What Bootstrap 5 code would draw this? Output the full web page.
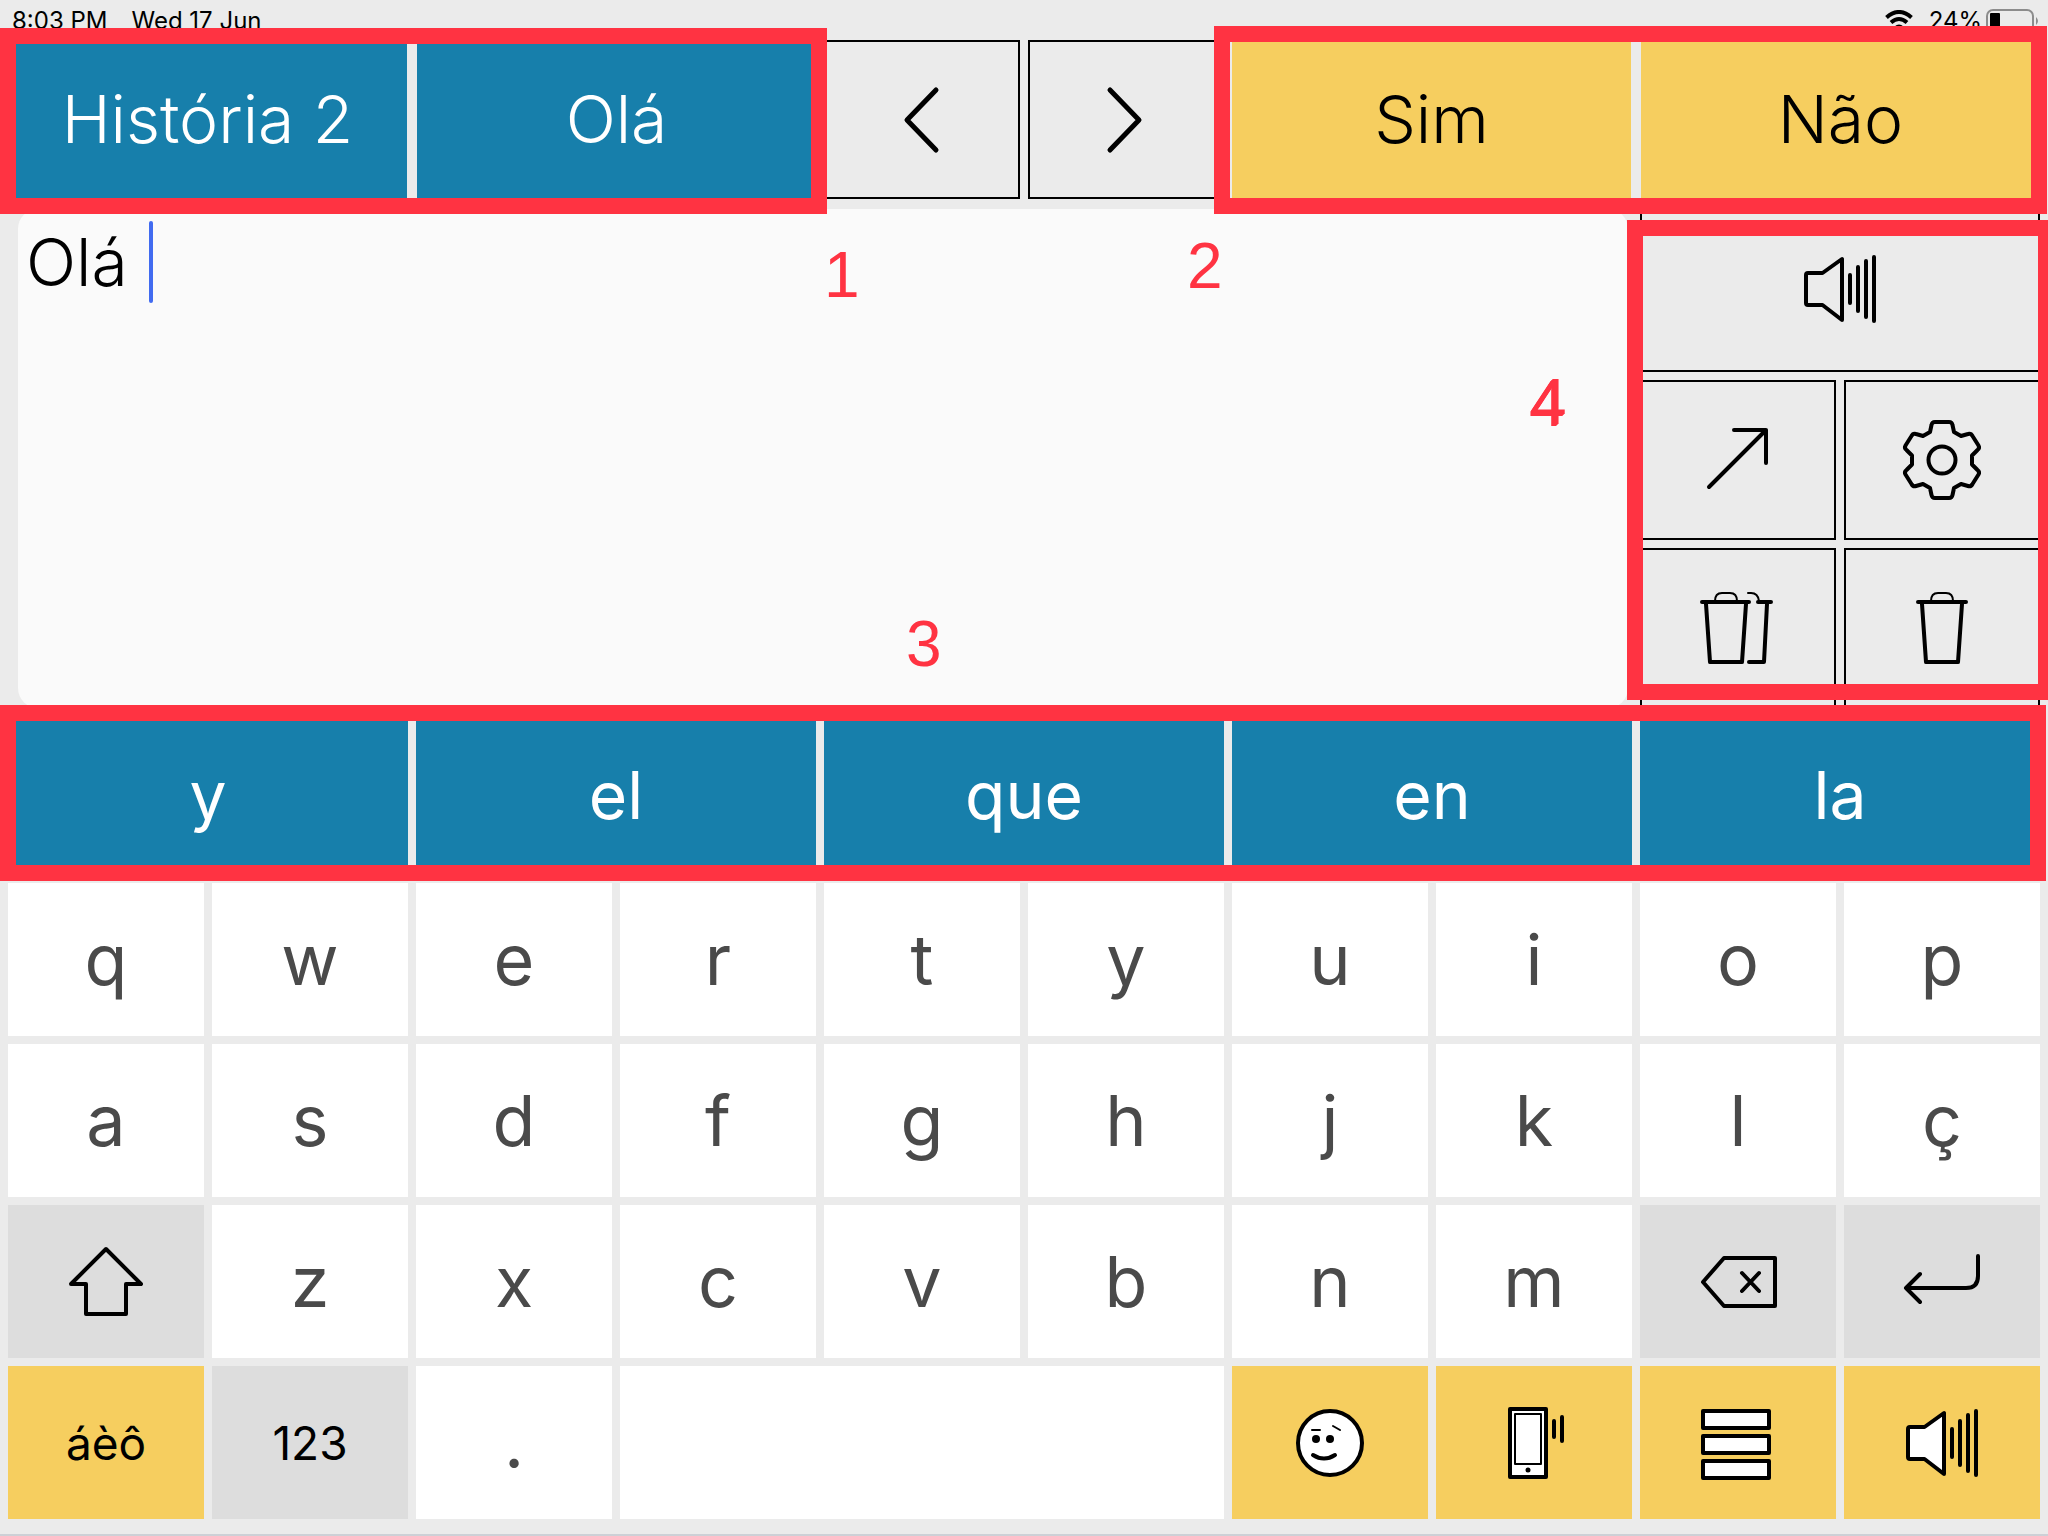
<!DOCTYPE html>
<html lang="pt">
<head>
<meta charset="utf-8">
<meta name="viewport" content="width=device-width, initial-scale=1">
<title>Teclado</title>
<link href="https://cdn.jsdelivr.net/npm/bootstrap@5.3.0/dist/css/bootstrap.min.css" rel="stylesheet">
<style>
  :root { --ink: #000; --blue: #177fab; --gold: #f6ce5f; --paper: #ebebeb; --red: #ff3342; }
  body { background: var(--paper); color: var(--ink); font-family: Inter, "Liberation Sans", sans-serif; border-bottom: 2px solid #cdd0d6; overflow-x: hidden; min-height: 100vh; }
  .board { padding: 0 8px 14px; }
  .gap-key { gap: 8px; }
  .gap-phrase { gap: 10px; }
  .status { height: 40px; padding: 2px 0 0 4px; font-size: 24px; line-height: 38px; }
  .tile { border: 0; border-radius: 0; padding: 0; color: var(--ink); background: #fff; display: flex; align-items: center; justify-content: center; flex: 1 1 0; min-width: 0; font-weight: inherit; line-height: 1; }
  .tile-blue { background: var(--blue); color: #fff; }
  .tile-gold { background: var(--gold); }
  .tile-grey { background: #ddd; }
  .tile-line { background: transparent; border: 2px solid var(--ink); }
  .topline { height: 159px; font-size: 66px; font-weight: 300; }
  .topline .tile { padding-bottom: 2px; }
  .half { flex: 2 2 8px; }
  .phrase { flex: 4 4 24px; }
  .workspace { margin-top: 7px; height: 502px; }
  .writer { flex: 8 8 56px; padding: 3px 4px 0 10px; }
  .writer textarea { background: #fafafa; border: 0; border-radius: 20px; resize: none; outline: 0; padding: 14px 8px; font-size: 66px; font-weight: 300; line-height: 78px; color: var(--ink); }
  .caret { left: 141px; top: 15px; width: 4px; height: 82px; border-radius: 2px; background: #416bf0; }
  .note { color: var(--red); font: 64px/64px "Liberation Sans", sans-serif; }
  .n1 { left: 816px; top: 37px; }
  .n2 { left: 1179px; top: 28px; }
  .n3 { left: 898px; top: 406px; }
  .n4 { left: 1523px; top: 164px; text-shadow: -2px 2px 0 var(--red), -1px 1px 0 var(--red); }
  .tools { flex: 2 2 8px; }
  .tool-row { height: 160px; }
  .tool-wide { height: 166px; }
  .predict { height: 155px; margin-top: 12px; font-size: 66px; font-weight: 400; }
  .predict .tile { padding-bottom: 6px; }
  .keyrow { height: 153px; margin-top: 8px; font-size: 70px; font-weight: 400; }
  .keyrow .tile-letter { color: #4a4a4a; }
  .keyrow .tile-small { font-size: 46px; }
  .tile-space { flex: 3 3 16px; }
  .frame { border: 16px solid var(--red); pointer-events: none; z-index: 2; }
  .frame-story { inset: -12px -11px -15px -8px; }
  .frame-answer { inset: -14px -7px -15px -18px; }
  .frame-predict { inset: -15px -6px -6px -8px; }
  .frame-tools { inset: 14px -14px 8px -13px; }
  .glyph { width: 84px; height: 84px; fill: none; stroke: var(--ink); stroke-width: 4; stroke-linecap: round; stroke-linejoin: round; }
  .glyph .thin { stroke-width: 2; }
  .glyph .solid { fill: var(--ink); stroke: none; }
  .glyph-white { fill: #fff; }
  .glyph-bold { stroke-width: 5; }
</style>
<script src="https://cdn.jsdelivr.net/npm/bootstrap@5.3.0/dist/js/bootstrap.bundle.min.js"></script>
</head>
<body>
<svg width="0" height="0" class="position-absolute" aria-hidden="true">
  <symbol id="speaker" viewBox="-42 -42 84 84">
    <path d="M-32-16H-17.500L2-30V31L-17.500 16H-32Q-34 16-34 14V-14Q-34-16-32-16Z"/>
    <path d="M10-14V14M18-22V22M26-28V28M34-32V32"/>
  </symbol>
</svg>
<main class="board">
  <header class="status d-flex justify-content-between">
    <div class="d-flex"><span class="me-4">8:03 PM</span><span>Wed 17 Jun</span></div>
    <div class="d-flex align-items-center">
      <svg class="me-3" width="28" height="22" viewBox="0 0 28 22" fill="none" stroke="#000" stroke-width="4"><path d="M1.500 7.500Q14-3.500 26.500 7.500M6 12.500Q14 5.500 22 12.500"/><path d="M14 20L9.500 16.500Q14 12.500 18.500 16.500Z" fill="#000" stroke="none"/></svg>
      <span class="me-1">24%</span>
      <svg width="54" height="24" viewBox="0 0 54 24"><rect x="1" y="1" width="46" height="22" rx="6" fill="none" stroke="#8c8c8c" stroke-width="2"/><path d="M50 8Q54 12 50 16Z" fill="#8c8c8c"/><rect x="4" y="4" width="10" height="16" rx="1"/></svg>
    </div>
  </header>

  <nav class="topline d-flex gap-key">
    <div class="phrase position-relative d-flex gap-phrase">
      <button class="tile tile-blue">História 2</button>
      <button class="tile tile-blue">Olá</button>
      <div class="frame frame-story position-absolute"></div>
    </div>
    <div class="half d-flex gap-key">
      <button class="tile tile-line" aria-label="Anterior"><svg class="glyph glyph-bold" viewBox="-42 -42 84 84"><path d="M14-29L-15 1L14 31"/></svg></button>
      <button class="tile tile-line" aria-label="Seguinte"><svg class="glyph glyph-bold" viewBox="-42 -42 84 84"><path d="M-16-29L13 1L-16 31"/></svg></button>
    </div>
    <div class="phrase position-relative d-flex gap-phrase">
      <button class="tile tile-gold">Sim</button>
      <button class="tile tile-gold">Não</button>
      <div class="frame frame-answer position-absolute"></div>
    </div>
  </nav>

  <section class="workspace d-flex gap-key">
    <div class="writer position-relative">
      <textarea class="w-100 h-100 d-block" aria-label="Mensagem" spellcheck="false">Olá </textarea>
      <span class="caret position-absolute"></span>
      <span class="note n1 position-absolute">1</span>
      <span class="note n2 position-absolute">2</span>
      <span class="note n3 position-absolute">3</span>
      <span class="note n4 position-absolute">4</span>
    </div>
    <div class="tools position-relative d-flex flex-column gap-key">
      <div class="tool-wide d-flex">
        <button class="tile tile-line" aria-label="Falar"><svg class="glyph"><use href="#speaker"/></svg></button>
      </div>
      <div class="tool-row d-flex gap-key">
        <button class="tile tile-line" aria-label="Partilhar"><svg class="glyph" viewBox="-42 -42 84 84"><path d="M-29 27L28-30M-4-30H28V3"/></svg></button>
        <button class="tile tile-line" aria-label="Definições"><svg class="glyph" viewBox="-42 -42 84 84"><circle r="13.500"/><path d="M-7-38H7Q10-38 10.500-35L12-28L19-24L26-26Q29-27 30.500-24L36.500-14.500Q38-12 35.500-10L30-4.500V4.500L35.500 10Q38 12 36.500 14.500L30.500 24Q29 27 26 26L19 24L12 28L10.500 35Q10 38 7 38H-7Q-10 38-10.500 35L-12 28L-19 24L-26 26Q-29 27-30.500 24L-36.500 14.500Q-38 12-35.500 10L-30 4.500V-4.500L-35.500-10Q-38-12-36.500-14.500L-30.500-24Q-29-27-26-26L-19-24L-12-28L-10.500-35Q-10-38-7-38Z"/></svg></button>
      </div>
      <div class="tool-row d-flex gap-key">
        <button class="tile tile-line" aria-label="Apagar tudo"><svg class="glyph" viewBox="-42 -42 84 84"><path d="M-36-26H11M-32-24L-28 34H4L8-24M20-26H33M29-24L26 34H11"/><path class="thin" d="M-23-27Q-23-35-16-35H-8Q-1-35-1-27M10-35H13Q20-35 21-27"/></svg></button>
        <button class="tile tile-line" aria-label="Apagar"><svg class="glyph" viewBox="-42 -42 84 84"><path d="M-24-26H24M-20-24L-16 34H16L20-24"/><path class="thin" d="M-11-27Q-11-35-4-35H4Q11-35 11-27"/></svg></button>
      </div>
      <div class="frame frame-tools position-absolute"></div>
    </div>
  </section>

  <section class="predict position-relative d-flex gap-key">
    <button class="tile tile-blue">y</button>
    <button class="tile tile-blue">el</button>
    <button class="tile tile-blue">que</button>
    <button class="tile tile-blue">en</button>
    <button class="tile tile-blue">la</button>
    <div class="frame frame-predict position-absolute"></div>
  </section>

  <section>
    <div class="keyrow d-flex gap-key">
      <button class="tile tile-letter">q</button><button class="tile tile-letter">w</button><button class="tile tile-letter">e</button><button class="tile tile-letter">r</button><button class="tile tile-letter">t</button><button class="tile tile-letter">y</button><button class="tile tile-letter">u</button><button class="tile tile-letter">i</button><button class="tile tile-letter">o</button><button class="tile tile-letter">p</button>
    </div>
    <div class="keyrow d-flex gap-key">
      <button class="tile tile-letter">a</button><button class="tile tile-letter">s</button><button class="tile tile-letter">d</button><button class="tile tile-letter">f</button><button class="tile tile-letter">g</button><button class="tile tile-letter">h</button><button class="tile tile-letter">j</button><button class="tile tile-letter">k</button><button class="tile tile-letter">l</button><button class="tile tile-letter">ç</button>
    </div>
    <div class="keyrow d-flex gap-key">
      <button class="tile tile-grey" aria-label="Maiúsculas"><svg class="glyph" viewBox="-42 -42 84 84"><path d="M0-33L35 2H20V32H-20V2H-35Z"/></svg></button>
      <button class="tile tile-letter">z</button><button class="tile tile-letter">x</button><button class="tile tile-letter">c</button><button class="tile tile-letter">v</button><button class="tile tile-letter">b</button><button class="tile tile-letter">n</button><button class="tile tile-letter">m</button>
      <button class="tile tile-grey" aria-label="Retroceder"><svg class="glyph" viewBox="-42 -42 84 84"><path d="M-35 0L-14-24H37V24H-14ZM4-9L21 9M21-9L4 9"/></svg></button>
      <button class="tile tile-grey" aria-label="Nova linha"><svg class="glyph" viewBox="-42 -42 84 84"><path d="M36-26V-6Q36 6 24 6H-36M-22-8L-36 6L-22 20"/></svg></button>
    </div>
    <div class="keyrow d-flex gap-key">
      <button class="tile tile-gold tile-small">áèô</button>
      <button class="tile tile-grey tile-small">123</button>
      <button class="tile tile-letter">.</button>
      <button class="tile tile-space" aria-label="Espaço"></button>
      <button class="tile tile-gold" aria-label="Emoji"><svg class="glyph" viewBox="-42 -42 84 84"><circle r="32" fill="#fff"/><circle class="solid" cx="-14" cy="-4" r="4"/><circle class="solid" cy="-4" r="4"/><path class="thin" d="M-18-13H-10M3-17L10-13"/><path d="M-17 12Q-6 19 5 12"/></svg></button>
      <button class="tile tile-gold" aria-label="Telefone"><svg class="glyph" viewBox="-42 -42 84 84"><rect x="-24" y="-34" width="36" height="68" fill="#fff"/><rect class="thin" x="-19" y="-29" width="26" height="50"/><circle class="solid" cx="-6" cy="27" r="2.500"/><path d="M20-22V-6M28-26V-2"/></svg></button>
      <button class="tile tile-gold" aria-label="Lista"><svg class="glyph glyph-white" viewBox="-42 -42 84 84"><rect x="-35" y="-32" width="66" height="17"/><rect x="-35" y="-7" width="66" height="17"/><rect x="-35" y="18" width="66" height="17"/></svg></button>
      <button class="tile tile-gold" aria-label="Falar tecla"><svg class="glyph glyph-white"><use href="#speaker"/></svg></button>
    </div>
  </section>
</main>
</body>
</html>
